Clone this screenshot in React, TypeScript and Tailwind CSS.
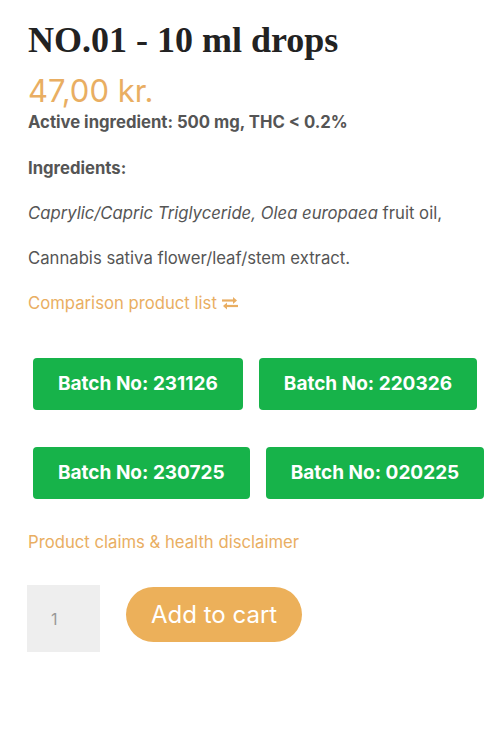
import React from 'react';

const batches = [
  ['231126', '220326'],
  ['230725', '020225'],
];

const SwapIcon = () => (
  <svg width="18" height="14" viewBox="0 0 18 14" className="inline-block ml-1 align-[-1px]">
    <path d="M1 4.5h13" stroke="currentColor" strokeWidth="2.2" fill="none" />
    <path d="M12 1l4 3.5-4 3.5z" fill="currentColor" />
    <path d="M17 10h-13" stroke="currentColor" strokeWidth="2.2" fill="none" />
    <path d="M6 6.5l-4 3.5 4 3.5z" fill="currentColor" />
  </svg>
);

export default function App() {
  return (
    <div className="w-[500px] min-h-[743px] bg-white px-[28px] pt-[20px] font-['Inter',sans-serif] text-[#555]">
      <h1 className="font-['Liberation_Serif',serif] font-bold text-[36px] leading-[40px] text-[#222]">
        NO.01 - 10 ml drops
      </h1>
      <div className="text-[#e9ae62] text-[31px] leading-[38px] mt-[12px]">47,00 kr.</div>
      <p className="text-[16.7px] font-bold leading-[22px] mt-[1px]">Active ingredient: 500 mg, THC &lt; 0.2%</p>
      <p className="text-[16.7px] font-bold leading-[22px] mt-[24px]">Ingredients:</p>
      <p className="text-[16.7px] leading-[22px] mt-[23px]">
        <em>Caprylic/Capric Triglyceride, Olea europaea</em> fruit oil,
      </p>
      <p className="text-[16.7px] leading-[22px] mt-[23px]">Cannabis sativa flower/leaf/stem extract.</p>
      <a className="block text-[16.7px] leading-[22px] mt-[23px] text-[#e9ae62]">
        Comparison product list
        <SwapIcon />
      </a>
      <div className="mt-[44px] flex flex-col gap-[37px] pl-[5px]">
        {batches.map((row, i) => (
          <div key={i} className="flex gap-[16px]">
            {row.map((b) => (
              <button
                key={b}
                className="shrink-0 whitespace-nowrap h-[52px] px-[25px] rounded-[4px] bg-[#17b34a] text-white font-bold text-[19px]"
              >
                Batch No: {b}
              </button>
            ))}
          </div>
        ))}
      </div>
      <a className="block text-[16.7px] leading-[22px] mt-[32px] text-[#e9ae62]">Product claims &amp; health disclaimer</a>
      <div className="flex items-start gap-[26px] mt-[32px] -ml-[1px]">
        <div className="w-[73px] h-[67px] bg-[#eeeeee] flex items-center pl-[24px] text-[16px] text-[#999]">1</div>
        <button className="mt-[2px] h-[55px] px-[25px] rounded-full bg-[#ecb05a] text-white text-[24px]">
          Add to cart
        </button>
      </div>
    </div>
  );
}
